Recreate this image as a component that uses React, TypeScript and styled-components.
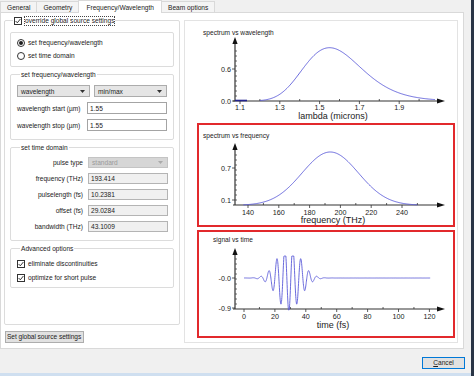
import React from "react";
import styled, { createGlobalStyle } from "styled-components";

const GlobalStyle = createGlobalStyle`
  html, body { margin: 0; padding: 0; background: #f0f0f0; }
  body {
    font-family: "Liberation Sans", Arial, sans-serif;
    font-size: 6.6px;
    color: #1e1e1e;
  }
  * { box-sizing: border-box; }
`;

const Window = styled.div`
  width: 474px;
  height: 376px;
  display: flex;
  background: #f0f0f0;
  overflow: hidden;
`;

const Main = styled.div`
  width: 471px;
  display: flex;
  flex-direction: column;
`;

const EdgeStrip = styled.div`
  width: 3px;
  background: #2a3546;
`;

const TabBar = styled.div`
  height: 12px;
  display: flex;
  align-items: flex-end;
  position: relative;
  z-index: 1;
`;

const Tab = styled.div<{ $active?: boolean }>`
  height: ${(p) => (p.$active ? "13px" : "11px")};
  margin-bottom: ${(p) => (p.$active ? "-1px" : "0")};
  margin-left: -1px;
  padding: 0 ${(p) => (p.$active ? "7px" : "6px")};
  display: flex;
  align-items: center;
  background: ${(p) => (p.$active ? "#fff" : "#f4f4f4")};
  border: 1px solid #d9d9d9;
  border-bottom: none;
  color: #222;
  white-space: nowrap;
  &:first-child { margin-left: 0; }
`;

const Pane = styled.div`
  width: 464px;
  height: 337px;
  background: #fff;
  border: 1px solid #d9d9d9;
  display: flex;
  gap: 4px;
  padding: 3px 5px 5px 3px;
`;

const LeftColumn = styled.div`
  width: 176px;
  display: flex;
  flex-direction: column;
`;

const GroupBox = styled.fieldset<{ $pad: string; $grow?: boolean; $gap?: number }>`
  margin: 0;
  min-width: 0;
  border: 1px solid #dcdcdc;
  border-radius: 2px;
  padding: ${(p) => p.$pad};
  display: flex;
  flex-direction: column;
  gap: ${(p) => p.$gap ?? 0}px;
  flex: ${(p) => (p.$grow ? 1 : "none")};
  & + & { margin-top: 3px; }
`;

const GroupTitle = styled.legend`
  padding: 0 1px;
  margin-left: 3px;
  line-height: 9px;
  height: 9px;
  display: flex;
  align-items: center;
  gap: 3px;
  color: #222;
`;

const FocusText = styled.span`
  outline: 1px dotted #444;
  outline-offset: 0;
  line-height: 8px;
`;

const CheckRow = styled.label`
  height: 9px;
  display: flex;
  align-items: center;
  gap: 3px;
  color: #222;
`;

const Box = styled.span`
  width: 8px;
  height: 8px;
  border: 1px solid #333;
  background: #fff;
  display: inline-flex;
  align-items: center;
  justify-content: center;
  flex: none;
`;

const Radio = styled.span<{ $on?: boolean }>`
  width: 8px;
  height: 8px;
  border: 1px solid #333;
  border-radius: 50%;
  background: #fff;
  display: inline-flex;
  align-items: center;
  justify-content: center;
  flex: none;
  &::after {
    content: "";
    width: 4px;
    height: 4px;
    border-radius: 50%;
    background: ${(p) => (p.$on ? "#1e1e1e" : "transparent")};
  }
`;

const Row = styled.div<{ $h: number }>`
  height: ${(p) => p.$h}px;
  display: flex;
  align-items: center;
  gap: 4px;
`;

const FieldLabel = styled.span<{ $right?: boolean }>`
  flex: 1;
  text-align: ${(p) => (p.$right ? "right" : "left")};
  padding-right: ${(p) => (p.$right ? "1px" : "0")};
  white-space: nowrap;
  color: #222;
`;

const TextInput = styled.div<{ $readOnly?: boolean }>`
  width: 80px;
  height: 100%;
  border: 1px solid ${(p) => (p.$readOnly ? "#b4b4b4" : "#a4a4a4")};
  background: ${(p) => (p.$readOnly ? "#f0f0f0" : "#fff")};
  padding-left: 2px;
  display: flex;
  align-items: center;
  color: #222;
`;

const Combo = styled.div<{ $disabled?: boolean; $w?: number }>`
  width: ${(p) => (p.$w ? `${p.$w}px` : "auto")};
  flex: ${(p) => (p.$w ? "none" : 1)};
  height: 100%;
  border: 1px solid ${(p) => (p.$disabled ? "#c4c4c4" : "#acacac")};
  background: ${(p) => (p.$disabled ? "#d6d6d6" : "#e5e5e5")};
  color: ${(p) => (p.$disabled ? "#9a9a9a" : "#222")};
  padding: 0 4px 0 3px;
  display: flex;
  align-items: center;
  justify-content: space-between;
`;

const PushButton = styled.button<{ $default?: boolean }>`
  font: inherit;
  color: #222;
  background: #e1e1e1;
  border: 1px solid ${(p) => (p.$default ? "#0078d7" : "#adadad")};
  height: 12px;
  padding: 0 1px;
  margin: 0;
  line-height: 10px;
  white-space: nowrap;
`;

const GlobalButton = styled(PushButton)`
  width: 79px;
  margin: 6px 0 0 1px;
  align-self: flex-start;
  text-align: left;
  letter-spacing: -0.05px;
  overflow: visible;
`;

const PlotPanel = styled.div`
  width: 274px;
  margin-top: 4px;
  background: #fff;
  border: 1px solid #e3e3e3;
  padding: 0 2px 4px 12px;
  display: flex;
  flex-direction: column;
  gap: 3px;
`;

const PlotBox = styled.div<{ $h: number; $marked?: boolean }>`
  height: ${(p) => p.$h}px;
  border: 2px solid ${(p) => (p.$marked ? "#e2292c" : "transparent")};
`;

const PlotSvg = styled.svg`
  display: block;
  overflow: visible;
  font-family: "Liberation Sans", Arial, sans-serif;
`;

const Footer = styled.div`
  height: 24px;
  display: flex;
  justify-content: flex-end;
  align-items: flex-start;
  padding: 8px 6px 0 0;
`;

const CancelButton = styled(PushButton)`
  width: 43px;
  text-align: center;
`;

const BottomStrip = styled.div`
  height: 3px;
  background: #cfdff0;
`;

const CheckMark = () => (
  <svg width="6" height="6" viewBox="0 0 6 6">
    <path d="M0.6 3 L2.3 4.8 L5.4 1" fill="none" stroke="#222" strokeWidth="0.9" />
  </svg>
);

const DropArrow = ({ color = "#333" }: { color?: string }) => (
  <svg width="5" height="3" viewBox="0 0 5 3">
    <path d="M0 0 H5 L2.5 3 Z" fill={color} />
  </svg>
);

// ---------- plots ----------

type PlotSpec = {
  title: string;
  titleX: number;
  titleY: number;
  top: number;
  base: number;
  xTicks: { x: number; label?: string }[];
  yLabels: { y: number; label: string }[];
  tickLabelY: number;
  xLabel: string;
  xLabelY: number;
  points: [number, number][];
  stub?: boolean;
};

const AXIS_X = 38;
const C_UM_THZ = 299.79;
const F0 = 193.414;
const SIGMA_F = 43.1009 / 2.355;

const spectrum = (f: number) => Math.exp(-((f - F0) ** 2) / (2 * SIGMA_F ** 2));

const sample = (a: number, b: number, step: number) => {
  const out: number[] = [];
  for (let v = a; v <= b + 1e-9; v += step) out.push(v);
  return out;
};

const lamX = (l: number) => 43 + (l - 1.1) * 199;
const freqX = (f: number) => 51 + (f - 140) * 1.54;
const timeX = (t: number) => 47 + t * 1.545;

const wavelengthPlot: PlotSpec = {
  title: "spectrum vs wavelength",
  titleX: 6,
  titleY: 12,
  top: 16,
  base: 80,
  xTicks: sample(0, 9, 1).map((i) => ({
    x: lamX(1.1 + i * 0.1),
    label: i % 2 === 0 ? (1.1 + i * 0.1).toFixed(1) : undefined,
  })),
  yLabels: [
    { y: 48, label: "0.6" },
    { y: 80, label: "0.0" },
  ],
  tickLabelY: 86.5,
  xLabel: "lambda (microns)",
  xLabelY: 94.5,
  points: sample(1.2, 2.08, 0.004).map((l) => [lamX(l), 80 - spectrum(C_UM_THZ / l) * 53.3]),
  stub: true,
};

const frequencyPlot: PlotSpec = {
  title: "spectrum vs frequency",
  titleX: 6,
  titleY: 13,
  top: 20,
  base: 82,
  xTicks: sample(0, 11, 1).map((i) => ({
    x: freqX(140 + i * 10),
    label: i % 2 === 0 ? String(140 + i * 10) : undefined,
  })),
  yLabels: [
    { y: 45, label: "0.7" },
    { y: 77, label: "0.1" },
  ],
  tickLabelY: 89,
  xLabel: "frequency (THz)",
  xLabelY: 97,
  points: sample(137, 250, 0.5).map((f) => [freqX(f), 82.3 - spectrum(f) * 53.3]),
};

const signal = (t: number) => {
  const t0 = 29.0284;
  return -Math.cos(2 * Math.PI * (F0 / 1000) * (t - t0)) * Math.exp(-((t - t0) ** 2) / (2 * 7.4 ** 2));
};

const timePlot: PlotSpec = {
  title: "signal vs time",
  titleX: 16,
  titleY: 10,
  top: 18,
  base: 79,
  xTicks: sample(0, 12, 1).map((i) => ({
    x: timeX(i * 10),
    label: i % 2 === 0 ? String(i * 10) : undefined,
  })),
  yLabels: [
    { y: 48, label: "-0.0" },
    { y: 78, label: "-0.9" },
  ],
  tickLabelY: 86,
  xLabel: "time (fs)",
  xLabelY: 94.5,
  points: sample(0, 120.5, 0.1).map((t) => [
    timeX(t),
    Math.min(80, Math.max(26, 48 - signal(t) * 33.3)),
  ]),
};

function Plot({ spec, height }: { spec: PlotSpec; height: number }) {
  const h = height - 4;
  const minor: number[] = [];
  for (let y = spec.base - 5; y > spec.top + 9; y -= 5) minor.push(y);
  const d = spec.points.map(([x, y], i) => `${i ? "L" : "M"}${x.toFixed(2)} ${y.toFixed(2)}`).join(" ");
  return (
    <PlotSvg width={254} height={h} viewBox={`2 2 254 ${h}`}>
      <text x={spec.titleX} y={spec.titleY} dy="0.35em" fontSize="6.6" fill="#222">
        {spec.title}
      </text>
      <line x1={AXIS_X} y1={spec.top + 5} x2={AXIS_X} y2={spec.base} stroke="#333" strokeWidth="1.2" />
      <polygon
        points={`${AXIS_X},${spec.top} ${AXIS_X - 2.6},${spec.top + 7} ${AXIS_X + 2.6},${spec.top + 7}`}
        fill="#111"
      />
      <line x1={AXIS_X - 2} y1={spec.base} x2={242} y2={spec.base} stroke="#333" strokeWidth="1.2" />
      <polygon points={`248,${spec.base} 240,${spec.base - 2.6} 240,${spec.base + 2.6}`} fill="#111" />
      {minor.map((y) => (
        <line key={y} x1={AXIS_X} y1={y} x2={AXIS_X + 2} y2={y} stroke="#444" strokeWidth="0.8" />
      ))}
      {spec.yLabels.map((l) => (
        <g key={l.label}>
          <line x1={AXIS_X - 3} y1={l.y} x2={AXIS_X} y2={l.y} stroke="#333" strokeWidth="0.8" />
          <text x={AXIS_X - 4} y={l.y} dy="0.35em" fontSize="7.2" textAnchor="end" fill="#222">
            {l.label}
          </text>
        </g>
      ))}
      {spec.xTicks.map((t) =>
        t.label ? (
          <g key={t.x}>
            <line x1={t.x} y1={spec.base} x2={t.x} y2={spec.base + 3} stroke="#333" strokeWidth="0.8" />
            <text x={t.x} y={spec.tickLabelY} dy="0.35em" fontSize="7.2" textAnchor="middle" fill="#222">
              {t.label}
            </text>
          </g>
        ) : (
          <line key={t.x} x1={t.x} y1={spec.base - 2} x2={t.x} y2={spec.base} stroke="#333" strokeWidth="0.8" />
        )
      )}
      <text x={136} y={spec.xLabelY} dy="0.35em" fontSize="9" textAnchor="middle" fill="#222">
        {spec.xLabel}
      </text>
      {spec.stub && <line x1={AXIS_X} y1={spec.base - 0.5} x2={50} y2={spec.base - 0.5} stroke="#23238f" strokeWidth="1.6" />}
      <path d={d} fill="none" stroke="#5a5ad8" strokeWidth="0.9" />
    </PlotSvg>
  );
}

const TABS = ["General", "Geometry", "Frequency/Wavelength", "Beam options"];

const TIME_FIELDS = [
  { label: "frequency (THz)", value: "193.414" },
  { label: "pulselength (fs)", value: "10.2381" },
  { label: "offset (fs)", value: "29.0284" },
  { label: "bandwidth (THz)", value: "43.1009" },
];

export default function App() {
  return (
    <Window>
      <GlobalStyle />
      <Main>
        <TabBar>
          {TABS.map((t) => (
            <Tab key={t} $active={t === "Frequency/Wavelength"}>
              {t}
            </Tab>
          ))}
        </TabBar>

        <Pane>
          <LeftColumn>
            <GroupBox $pad="7px 5px 0 5px" $grow>
              <GroupTitle>
                <Box>
                  <CheckMark />
                </Box>
                <FocusText>override global source settings</FocusText>
              </GroupTitle>

              <GroupBox $pad="5px 6px 6px 6px" $gap={4}>
                <CheckRow>
                  <Radio $on />
                  set frequency/wavelength
                </CheckRow>
                <CheckRow>
                  <Radio />
                  set time domain
                </CheckRow>
              </GroupBox>

              <GroupBox $pad="6px 6px 8px 6px" $gap={5}>
                <GroupTitle>set frequency/wavelength</GroupTitle>
                <Row $h={12}>
                  <Combo $w={73}>
                    wavelength
                    <DropArrow />
                  </Combo>
                  <Combo $w={73}>
                    min/max
                    <DropArrow />
                  </Combo>
                </Row>
                <Row $h={12}>
                  <FieldLabel>wavelength start (µm)</FieldLabel>
                  <TextInput>1.55</TextInput>
                </Row>
                <Row $h={12}>
                  <FieldLabel>wavelength stop (µm)</FieldLabel>
                  <TextInput>1.55</TextInput>
                </Row>
              </GroupBox>

              <GroupBox $pad="5px 5px 8px 6px" $gap={5}>
                <GroupTitle>set time domain</GroupTitle>
                <Row $h={11}>
                  <FieldLabel $right>pulse type</FieldLabel>
                  <Combo $w={80} $disabled>
                    standard
                    <DropArrow color="#aaa" />
                  </Combo>
                </Row>
                {TIME_FIELDS.map((f) => (
                  <Row $h={11} key={f.label}>
                    <FieldLabel $right>{f.label}</FieldLabel>
                    <TextInput $readOnly>{f.value}</TextInput>
                  </Row>
                ))}
              </GroupBox>

              <GroupBox $pad="6px 6px 5px 6px" $gap={5}>
                <GroupTitle>Advanced options</GroupTitle>
                <CheckRow>
                  <Box>
                    <CheckMark />
                  </Box>
                  eliminate discontinuities
                </CheckRow>
                <CheckRow>
                  <Box>
                    <CheckMark />
                  </Box>
                  optimize for short pulse
                </CheckRow>
              </GroupBox>
            </GroupBox>

            <GlobalButton>Set global source settings</GlobalButton>
          </LeftColumn>

          <PlotPanel>
            <PlotBox $h={99}>
              <Plot spec={wavelengthPlot} height={99} />
            </PlotBox>
            <PlotBox $h={104} $marked>
              <Plot spec={frequencyPlot} height={104} />
            </PlotBox>
            <PlotBox $h={108} $marked>
              <Plot spec={timePlot} height={108} />
            </PlotBox>
          </PlotPanel>
        </Pane>

        <Footer>
          <CancelButton $default>
            <u>C</u>ancel
          </CancelButton>
        </Footer>
        <BottomStrip />
      </Main>
      <EdgeStrip />
    </Window>
  );
}
